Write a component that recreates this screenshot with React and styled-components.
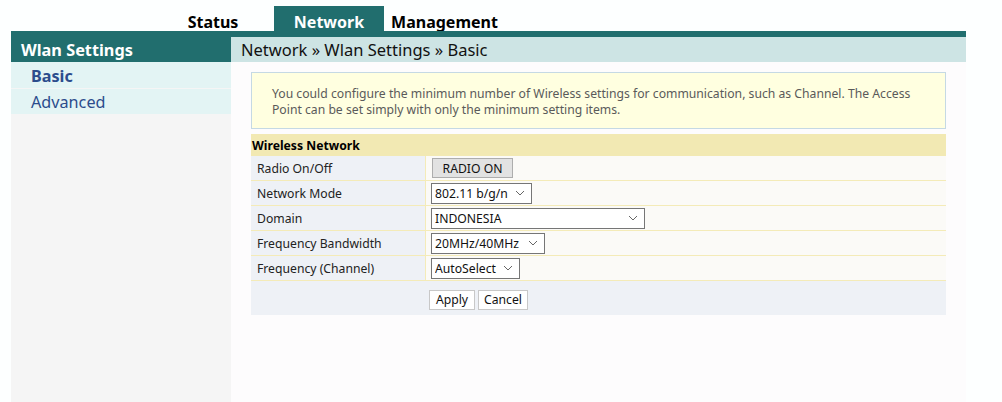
import React from "react";
import styled, { createGlobalStyle } from "styled-components";

const GlobalStyle = createGlobalStyle`
  html, body {
    margin: 0;
    background: #fdffff;
  }
  body {
    font-family: "Noto Sans", "Open Sans", sans-serif;
  }
  * {
    box-sizing: border-box;
  }
`;

const Page = styled.div`
  width: 955px;
  height: 402px;
  margin-left: 11px;
  padding-top: 6px;
  display: flex;
  flex-direction: column;
  overflow: hidden;
`;

const Tabs = styled.nav`
  display: flex;
  height: 25px;
  padding-left: 153px;
`;

const Tab = styled.a`
  width: ${(p) => p.$width}px;
  margin-right: ${(p) => p.$gap || 0}px;
  text-align: center;
  font-size: 16px;
  font-weight: 700;
  line-height: 32px;
  color: ${(p) => (p.$active ? "#ffffff" : "#000000")};
  background: ${(p) => (p.$active ? "#216e6e" : "transparent")};
`;

const Body = styled.div`
  flex: 1;
  display: flex;
  border-top: 6px solid #216e6e;
`;

const Sidebar = styled.aside`
  width: 220px;
  background: #f5f5f5;
`;

const SideHead = styled.div`
  height: 25px;
  padding-left: 10px;
  background: #216e6e;
  color: #ffffff;
  font-size: 16.3px;
  font-weight: 700;
  line-height: 27px;
`;

const SideItem = styled.a`
  display: block;
  height: ${(p) => (p.$active ? 26 : 25)}px;
  margin-bottom: 1px;
  padding-left: 20px;
  background: #e3f4f4;
  color: #2c4c8c;
  font-size: 16.2px;
  font-weight: ${(p) => (p.$active ? 700 : 400)};
  line-height: ${(p) => (p.$active ? 28 : 26)}px;
`;

const Main = styled.main`
  flex: 1;
  background: #fdfcfd;
`;

const Crumbs = styled.div`
  height: 25px;
  padding-left: 10px;
  background: #cde4e4;
  color: #111111;
  font-size: 16.5px;
  line-height: 26px;
`;

const Content = styled.div`
  padding: 10px 20px 0;
`;

const Notice = styled.p`
  margin: 0 0 5px;
  height: 57px;
  padding: 13px 20px 0;
  background: #ffffe0;
  border: 1px solid #c5d9e4;
  color: #5a5a5a;
  font-size: 12.2px;
  line-height: 16px;
`;

const Form = styled.form`
  display: grid;
  grid-template-columns: 175px 1fr;
  font-size: 12.2px;
  color: #222222;
`;

const SectionTitle = styled.div`
  grid-column: 1 / -1;
  height: 22px;
  padding-left: 1px;
  background: #f2e9b3;
  color: #000000;
  font-weight: 700;
  line-height: 23px;
`;

const Label = styled.div`
  height: 25px;
  padding-left: 6px;
  background: #eef1f6;
  border-bottom: 1px solid #f4ebb8;
  border-right: 1px solid #f4ebb8;
  line-height: 25px;
`;

const Value = styled.div`
  height: 25px;
  display: flex;
  align-items: center;
  padding-left: 5px;
  background: #fbfaf7;
  border-bottom: 1px solid #f4ebb8;
`;

const RadioButton = styled.button`
  width: 81px;
  height: 20px;
  margin-left: 1px;
  padding: 0;
  background: #e2e2e2;
  border: 1px solid #adadad;
  color: #111111;
  font: inherit;
`;

const arrow =
  "data:image/svg+xml,%3Csvg xmlns='http://www.w3.org/2000/svg' width='10' height='6'%3E%3Cpath d='M1 1l4 4 4-4' fill='none' stroke='%23666' stroke-width='1'/%3E%3C/svg%3E";

const Select = styled.select`
  appearance: none;
  width: ${(p) => p.$width}px;
  height: 21px;
  padding: 0 0 0 3px;
  background: #ffffff url("${arrow}") no-repeat right 6px center;
  border: 1px solid #767676;
  border-radius: 0;
  color: #111111;
  font: inherit;
`;

const Actions = styled.div`
  grid-column: 1 / -1;
  height: 34px;
  display: flex;
  align-items: center;
  gap: 3px;
  padding: 3px 0 0 178px;
  background: #eef1f6;
`;

const ActionButton = styled.button`
  width: ${(p) => p.$width}px;
  height: 20px;
  padding: 0;
  background: #ffffff;
  border: 1px solid #c8c8c8;
  color: #111111;
  font: inherit;
`;

const selects = [
  { label: "Network Mode", width: 101, value: "802.11 b/g/n" },
  { label: "Domain", width: 214, value: "INDONESIA" },
  { label: "Frequency Bandwidth", width: 114, value: "20MHz/40MHz" },
  { label: "Frequency (Channel)", width: 89, value: "AutoSelect" },
];

export default function App() {
  return (
    <Page>
      <GlobalStyle />
      <Tabs>
        <Tab $width={98} $gap={12}>Status</Tab>
        <Tab $width={110} $active $gap={7}>Network</Tab>
        <Tab $width={107}>Management</Tab>
      </Tabs>
      <Body>
        <Sidebar>
          <SideHead>Wlan Settings</SideHead>
          <SideItem $active>Basic</SideItem>
          <SideItem>Advanced</SideItem>
        </Sidebar>
        <Main>
          <Crumbs>Network » Wlan Settings » Basic</Crumbs>
          <Content>
            <Notice>
              You could configure the minimum number of Wireless settings for communication, such as
              Channel. The Access Point can be set simply with only the minimum setting items.
            </Notice>
            <Form>
              <SectionTitle>Wireless Network</SectionTitle>
              <Label>Radio On/Off</Label>
              <Value>
                <RadioButton type="button">RADIO ON</RadioButton>
              </Value>
              {selects.map((s) => (
                <React.Fragment key={s.label}>
                  <Label>{s.label}</Label>
                  <Value>
                    <Select $width={s.width} defaultValue={s.value}>
                      <option>{s.value}</option>
                    </Select>
                  </Value>
                </React.Fragment>
              ))}
              <Actions>
                <ActionButton type="button" $width={46}>Apply</ActionButton>
                <ActionButton type="button" $width={50}>Cancel</ActionButton>
              </Actions>
            </Form>
          </Content>
        </Main>
      </Body>
    </Page>
  );
}
